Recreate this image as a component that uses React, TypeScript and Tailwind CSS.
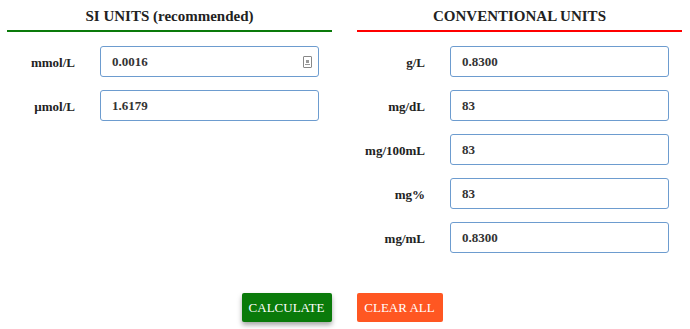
import React from "react";

const Row = ({ label, value, spin }: { label: string; value: string; spin?: boolean }) => (
  <div className="flex items-center h-[31px]">
    <div className="w-[68px] text-right text-[13px] font-bold text-[#222] pt-[3px] font-['Liberation_Serif',serif]">{label}</div>
    <div className="ml-[25px] relative w-[219px] h-[31px] rounded-[3px] border border-[#6d9ccf] bg-white flex items-center pl-[11px] text-[13px] font-bold text-[#333] font-['Liberation_Serif',serif]">
      {value}
      {spin && (
        <span className="absolute right-[6px] top-[9px] w-[9px] h-[12px] border border-[#888] rounded-[1px] flex flex-col items-center justify-center">
          <span className="block w-[3px] h-[3px] bg-[#999]" />
          <span className="block w-[5px] h-[1px] bg-[#999] mt-[1px]" />
        </span>
      )}
    </div>
  </div>
);

export default function App() {
  return (
    <div className="w-[690px] h-[329px] bg-white relative font-['Liberation_Serif',serif]">
      <div className="flex pt-[6px] pl-[7px] gap-[25px]">
        <div className="w-[325px]">
          <div className="h-[24px] text-center text-[15px] font-bold text-[#222] leading-[20px]">SI UNITS (recommended)</div>
          <div className="h-[2px] bg-[#0a7a0a]" />
          <div className="flex flex-col gap-[13px] pt-[14px]">
            <Row label="mmol/L" value="0.0016" spin />
            <Row label="µmol/L" value="1.6179" />
          </div>
        </div>
        <div className="w-[325px]">
          <div className="h-[24px] text-center text-[15px] font-bold text-[#222] leading-[20px]">CONVENTIONAL UNITS</div>
          <div className="h-[2px] bg-[#ff0000]" />
          <div className="flex flex-col gap-[13px] pt-[14px]">
            <Row label="g/L" value="0.8300" />
            <Row label="mg/dL" value="83" />
            <Row label="mg/100mL" value="83" />
            <Row label="mg%" value="83" />
            <Row label="mg/mL" value="0.8300" />
          </div>
        </div>
      </div>
      <div className="flex justify-center gap-[25px] pt-[40px] pr-[6px]">
        <button className="w-[90px] h-[29px] bg-[#0a7a0a] text-white text-[13px] rounded-[2px] shadow-[0_3px_5px_rgba(0,0,0,0.35)] font-['Liberation_Serif',serif]">
          CALCULATE
        </button>
        <button className="w-[86px] h-[29px] bg-[#ff5722] text-white text-[13px] rounded-[2px] font-['Liberation_Serif',serif]">
          CLEAR ALL
        </button>
      </div>
    </div>
  );
}
